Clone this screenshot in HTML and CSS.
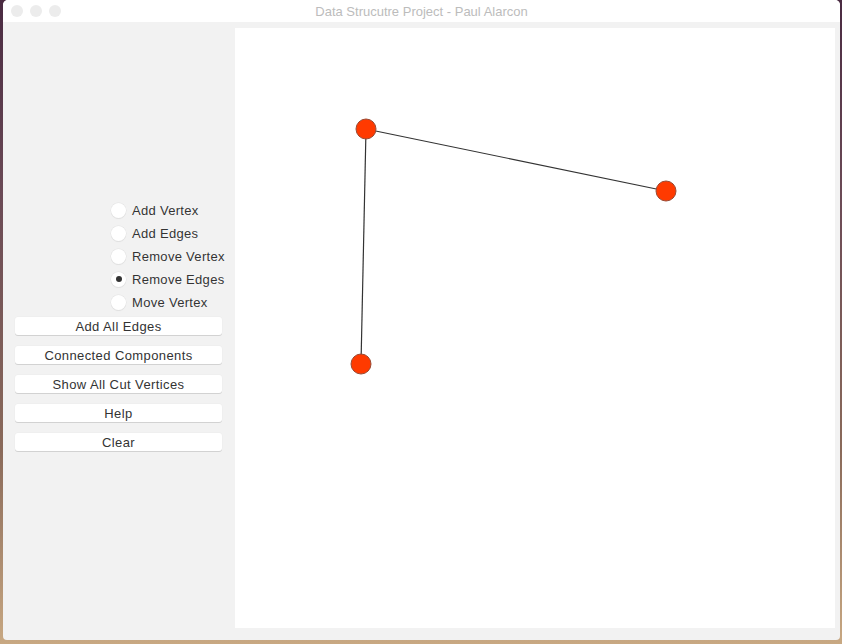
FILE: index.html
```html
<!DOCTYPE html>
<html>
<head>
<meta charset="utf-8">
<link rel="stylesheet" href="styles.css">
</head>
<body>
<div class="desktop">
  <div class="window">
    <div class="titlebar">
      <div class="lights">
        <span class="light"></span><span class="light"></span><span class="light"></span>
      </div>
      <div class="title">Data Strucutre Project - Paul Alarcon</div>
    </div>
    <div class="content">
      <div class="panel">
        <div class="radios">
          <label class="radio"><span class="dot"></span><span class="rlabel">Add Vertex</span></label>
          <label class="radio"><span class="dot"></span><span class="rlabel">Add Edges</span></label>
          <label class="radio"><span class="dot"></span><span class="rlabel">Remove Vertex</span></label>
          <label class="radio"><span class="dot checked"></span><span class="rlabel">Remove Edges</span></label>
          <label class="radio"><span class="dot"></span><span class="rlabel">Move Vertex</span></label>
        </div>
        <div class="buttons">
          <div class="btn">Add All Edges</div>
          <div class="btn">Connected Components</div>
          <div class="btn">Show All Cut Vertices</div>
          <div class="btn">Help</div>
          <div class="btn">Clear</div>
        </div>
      </div>
      <div class="canvas">
        <svg width="600" height="600" viewBox="0 0 600 600">
          <line x1="131" y1="101" x2="431" y2="163" stroke="#333" stroke-width="1.2"/>
          <line x1="131" y1="101" x2="126" y2="336" stroke="#333" stroke-width="1.2"/>
          <circle cx="131" cy="101" r="10" fill="#ff3a00" stroke="#9a4a34" stroke-width="1"/>
          <circle cx="431" cy="163" r="10" fill="#ff3a00" stroke="#9a4a34" stroke-width="1"/>
          <circle cx="126" cy="336" r="10" fill="#ff3a00" stroke="#9a4a34" stroke-width="1"/>
        </svg>
      </div>
    </div>
  </div>
</div>
</body>
</html>
```

FILE: styles.css
```css
html, body {
  margin: 0;
  padding: 0;
}
body {
  width: 842px;
  height: 644px;
  overflow: hidden;
  font-family: "Liberation Sans", Arial, sans-serif;
}
.desktop {
  width: 842px;
  height: 644px;
  background: linear-gradient(to bottom, #4a2b42 0px, #4a2b42 2px, #6b4a56 30%, #8a6a5a 70%, #c8a882 100%);
  padding-left: 3px;
  box-sizing: border-box;
}
.window {
  width: 837px;
  height: 640px;
  background: #f2f2f2;
  border-radius: 5px 5px 4px 4px;
  overflow: hidden;
  display: flex;
  flex-direction: column;
}
.titlebar {
  height: 22px;
  background: #ffffff;
  position: relative;
  display: flex;
  align-items: center;
  justify-content: center;
  flex-shrink: 0;
}
.lights {
  position: absolute;
  left: 8px;
  top: 5px;
  display: flex;
  gap: 7px;
}
.light {
  width: 12px;
  height: 12px;
  border-radius: 50%;
  background: #ececec;
}
.title {
  font-size: 13px;
  color: #bcbcbc;
}
.content {
  display: flex;
  flex: 1;
}
.panel {
  width: 232px;
  flex-shrink: 0;
  padding-top: 180px;
  box-sizing: border-box;
}
.radios {
  display: flex;
  flex-direction: column;
  gap: 7px;
  padding-left: 108px;
}
.radio {
  display: flex;
  align-items: center;
  height: 16px;
  gap: 6px;
}
.dot {
  width: 15px;
  height: 15px;
  border-radius: 50%;
  background: #ffffff;
  box-shadow: 0 0 0 0.5px #e2e2e2, 0 1px 1px rgba(0,0,0,0.08);
  display: flex;
  align-items: center;
  justify-content: center;
  flex-shrink: 0;
}
.dot.checked::after {
  content: "";
  width: 6px;
  height: 6px;
  border-radius: 50%;
  background: #333;
}
.rlabel {
  font-size: 13px;
  letter-spacing: 0.3px;
  color: #333333;
  white-space: nowrap;
  text-shadow: 0 0 1px #fff;
}
.buttons {
  display: flex;
  flex-direction: column;
  gap: 11px;
  padding-left: 12px;
  margin-top: 7px;
  width: 219px;
  box-sizing: border-box;
}
.btn {
  height: 18px;
  background: #ffffff;
  border-radius: 3px;
  box-shadow: 0 1px 0 #d2d2d2, 0 0 0 0.5px #ececec;
  font-size: 13px;
  letter-spacing: 0.4px;
  color: #333333;
  display: flex;
  align-items: center;
  justify-content: center;
  white-space: nowrap;
}
.canvas {
  width: 600px;
  height: 600px;
  background: #ffffff;
  margin-top: 6px;
  flex-shrink: 0;
}
.canvas svg {
  display: block;
}
```
